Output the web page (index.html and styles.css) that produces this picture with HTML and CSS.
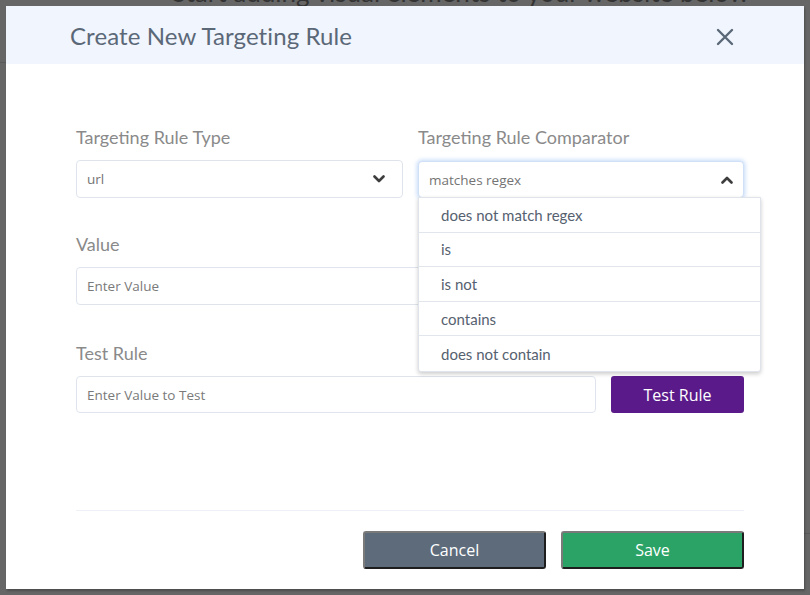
FILE: index.html
```html
<!DOCTYPE html>
<html lang="en">
<head>
<meta charset="utf-8">
<title>Create New Targeting Rule</title>
<link rel="stylesheet" href="styles.css">
</head>
<body>
<div class="backdrop-text">Start adding visual elements to your website below</div>
<div class="backdrop-line left"></div>
<div class="backdrop-line right"></div>
<div class="modal">
  <div class="modal-header">
    <h1 class="modal-title">Create New Targeting Rule</h1>
    <button class="close" aria-label="Close">
      <svg width="18" height="18" viewBox="0 0 18 18"><path d="M2 2L16 16M16 2L2 16" stroke="#5b6878" stroke-width="2.4" stroke-linecap="round"/></svg>
    </button>
  </div>
  <div class="modal-body">
    <div class="row two">
      <div class="field">
        <label class="label">Targeting Rule Type</label>
        <div class="select">
          <span class="select-value">url</span>
          <svg class="chev" width="12" height="8" viewBox="0 0 12 8"><path d="M1.5 1.5L6 6L10.5 1.5" fill="none" stroke="#3d3d3d" stroke-width="2.6" stroke-linecap="round" stroke-linejoin="round"/></svg>
        </div>
      </div>
      <div class="field">
        <label class="label">Targeting Rule Comparator</label>
        <div class="select-wrap">
          <div class="select focus">
            <span class="select-value">matches regex</span>
            <svg class="chev" width="12" height="8" viewBox="0 0 12 8"><path d="M1.5 6.5L6 2L10.5 6.5" fill="none" stroke="#3d3d3d" stroke-width="2.6" stroke-linecap="round" stroke-linejoin="round"/></svg>
          </div>
          <ul class="menu">
            <li>does not match regex</li>
            <li>is</li>
            <li>is not</li>
            <li>contains</li>
            <li>does not contain</li>
          </ul>
        </div>
      </div>
    </div>
    <div class="field value-field">
      <label class="label">Value</label>
      <div class="input"><span class="placeholder">Enter Value</span></div>
    </div>
    <div class="field test-field">
      <label class="label">Test Rule</label>
      <div class="test-row">
        <div class="input"><span class="placeholder">Enter Value to Test</span></div>
        <button class="btn btn-purple">Test Rule</button>
      </div>
    </div>
  </div>
  <div class="modal-footer">
    <button class="btn btn-foot btn-gray">Cancel</button>
    <button class="btn btn-foot btn-green">Save</button>
  </div>
</div>
</body>
</html>
```

FILE: styles.css
```css
* { box-sizing: border-box; }
html, body { margin: 0; height: 100%; }
body {
  background: #666666;
  padding: 6px;
  position: relative;
  overflow: hidden;
  font-family: "Open Sans", "Liberation Sans", sans-serif;
}
.backdrop-text {
  position: absolute;
  top: -24px;
  left: 172px;
  font-family: Lato, sans-serif;
  font-size: 26px;
  color: #333333;
  white-space: nowrap;
}
.backdrop-line {
  position: absolute;
  height: 1px;
  background: #5a5a5a;
  width: 8px;
}
.backdrop-line.left { left: 0; top: 62px; }
.backdrop-line.right { right: 0; top: 533px; }

.modal {
  position: relative;
  width: 798px;
  height: 583px;
  background: #ffffff;
  box-shadow: 1px 2px 2px rgba(0,0,0,0.25);
  display: flex;
  flex-direction: column;
}
.modal-header {
  height: 58px;
  flex: 0 0 58px;
  background: #f1f5fd;
  display: flex;
  align-items: center;
  justify-content: space-between;
  padding: 0 70px 0 64px;
}
.modal-title {
  margin: 0;
  font-family: Lato, sans-serif;
  font-weight: 400;
  font-size: 24px;
  color: #5b6878;
  letter-spacing: 0.1px;
}
.close {
  background: none;
  border: 0;
  padding: 0;
  width: 18px;
  height: 18px;
  display: flex;
  margin-top: 3px;
}

.modal-body {
  padding: 61px 60px 0 70px;
  flex: 1;
}
.row.two {
  display: grid;
  grid-template-columns: 327px 326px;
  column-gap: 15px;
}
.field { display: flex; flex-direction: column; }
.label {
  font-family: Lato, sans-serif;
  font-size: 18px;
  color: #8a8a8a;
  line-height: 24px;
  margin-bottom: 11px;
}
.select, .input {
  height: 38px;
  border: 1px solid #dfe4ec;
  border-radius: 4px;
  background: #fff;
  display: flex;
  align-items: center;
  justify-content: space-between;
  padding: 0 17px 0 10px;
  font-size: 13.5px;
  color: #777;
}
.select.focus {
  height: 37px;
  margin-top: 1px;
  border-color: #cfe0f7;
  box-shadow: 0 0 4px 1px rgba(120,170,240,0.45);
  padding-right: 10px;
}
.select-value { color: #747474; }
.select-wrap { position: relative; }
.chev { display: block; }
.menu {
  position: absolute;
  top: 37px;
  left: 0;
  width: 343px;
  margin: 0;
  padding: 0;
  list-style: none;
  background: #fff;
  border: 1px solid #dfe3ea;
  border-radius: 0 0 3px 3px;
  box-shadow: 0 2px 4px rgba(0,0,0,0.2);
  z-index: 5;
}
.menu li {
  height: 34.6px;
  display: flex;
  align-items: center;
  padding-left: 22px;
  font-family: Lato, sans-serif;
  font-size: 15px;
  color: #56616f;
  border-bottom: 1px solid #e1e5ec;
}
.menu li:last-child { border-bottom: 0; }

.value-field { margin-top: 34px; width: 668px; }
.test-field { margin-top: 36px; }
.placeholder { color: #7a7a7a; }
.test-row {
  display: flex;
  gap: 15px;
}
.test-row .input { flex: 0 0 520px; height: 37px; }
.btn {
  font-family: "Open Sans", sans-serif;
  font-size: 16px;
  color: #fff;
  cursor: pointer;
}
.btn-purple {
  flex: 1;
  height: 37px;
  background: #5a1a8a;
  border: 0;
  border-radius: 3px;
}

.modal-footer {
  margin: 0 60px 0 70px;
  border-top: 1px solid #eef2f8;
  height: 79px;
  flex: 0 0 79px;
  display: flex;
  justify-content: flex-end;
  align-items: flex-start;
  gap: 15px;
  padding-top: 20px;
}
.btn-foot {
  width: 183px;
  height: 38px;
  border-radius: 3px;
  border-style: solid;
  border-width: 2px;
  border-color: #7a7a7a #1e1e1e #1e1e1e #7a7a7a;
}
.btn-gray { background: #5d6b7b; }
.btn-green { background: #2ba366; }
```
